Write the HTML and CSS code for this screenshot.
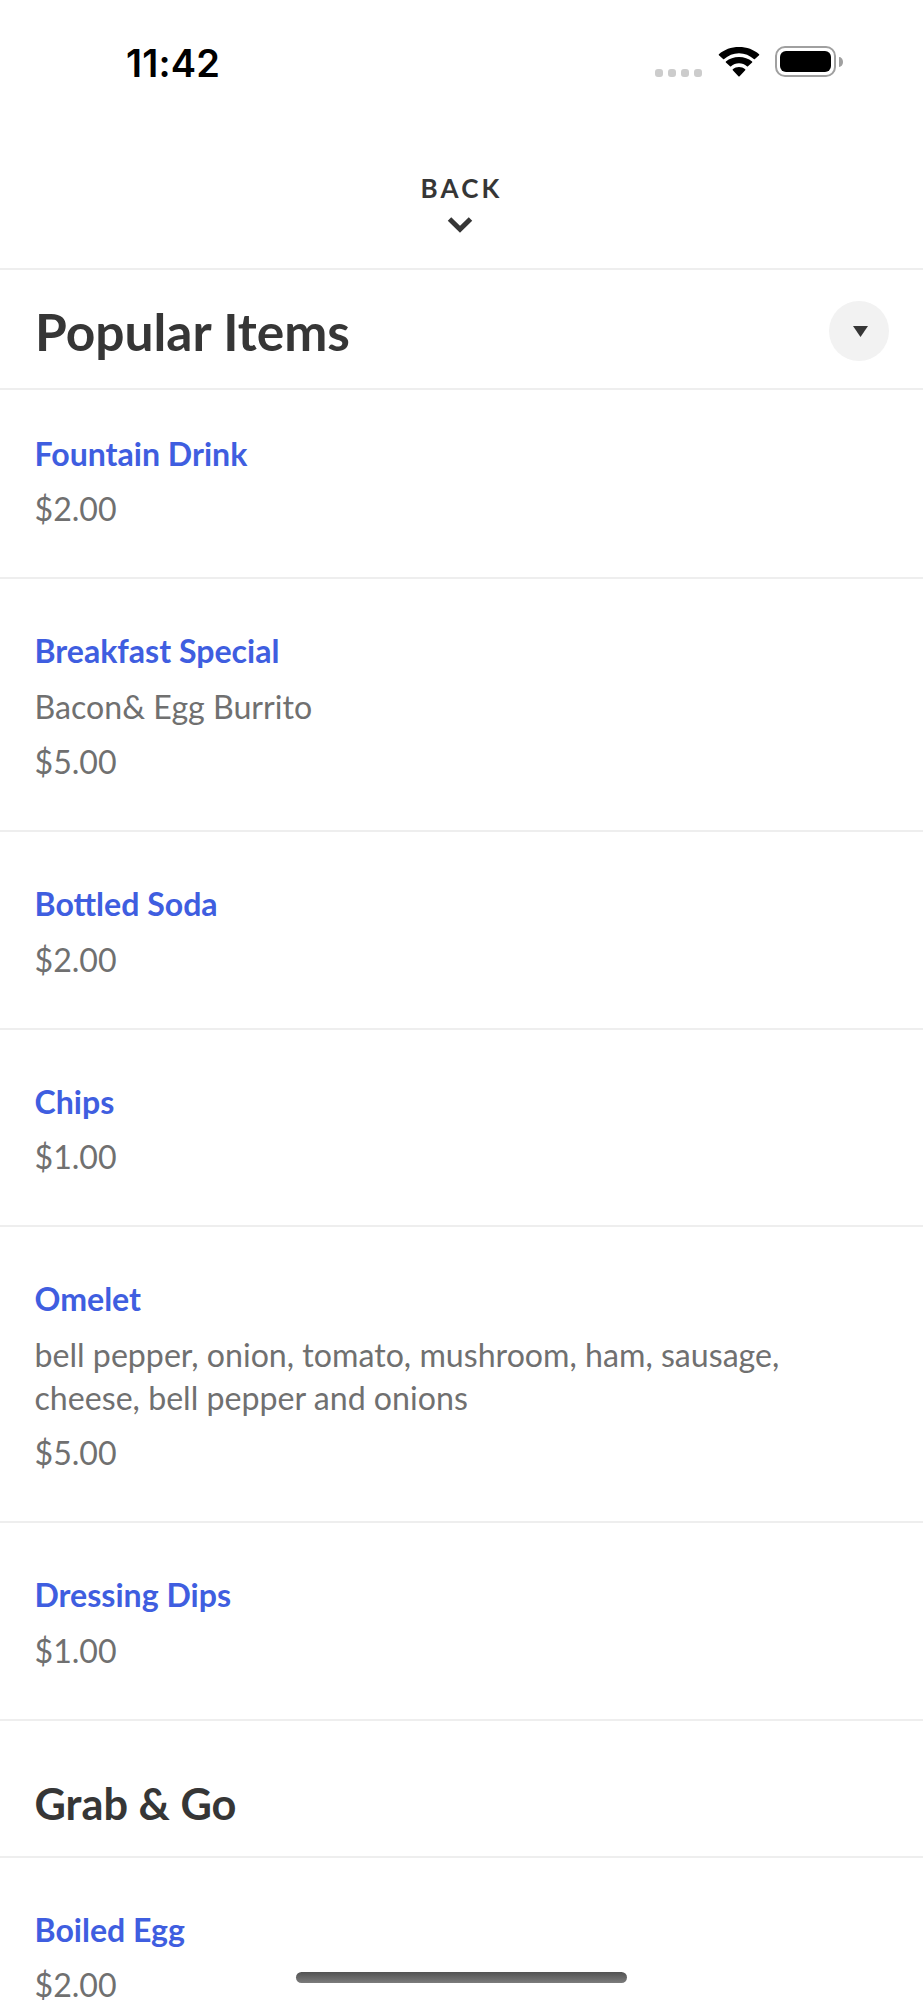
FILE: index.html
```html
<!DOCTYPE html>
<html lang="en">
  <head>
    <meta charset="UTF-8" />
    <title>Popular Items</title>
    <link rel="stylesheet" href="styles.css">
  </head>

  <body>
    <div class="statusbar">
      <span class="time">11:42</span>
      <div class="status-icons">
        <div class="dots"><i></i><i></i><i></i><i></i></div>
        <svg class="wifi" width="42" height="30" viewBox="0 0 42 30">
          <path d="M21 6.200c5.700 0 10.900 2.200 14.800 5.900.3.300.8.300 1.100 0l4.200-3.800c.3-.3.300-.8 0-1.100C35.900 2.600 28.800 0 21 0S6.100 2.600.9 7.200c-.3.300-.3.800 0 1.100l4.200 3.800c.3.300.8.300 1.100 0C10.100 8.400 15.300 6.200 21 6.200z"/>
          <path d="M21 16.200c3 0 5.800 1.100 7.900 3 .3.300.8.300 1.100 0l4.100-3.600c.3-.3.300-.8 0-1.100C30.600 11.700 26 10 21 10s-9.600 1.700-13.100 4.500c-.3.300-.3.800 0 1.100l4.100 3.600c.3.300.8.300 1.100 0 2.100-1.900 4.900-3 7.900-3z"/>
          <path d="M27.200 23.300c.3-.3.300-.8 0-1.100-3.600-2.900-8.800-2.900-12.400 0-.3.300-.3.800 0 1.100l5.600 6c.3.300.9.300 1.200 0z"/>
        </svg>
        <div class="battery"><b></b></div>
        <div class="tip"></div>
      </div>
    </div>

    <header>
      <span>BACK</span>
      <svg width="26" height="18" viewBox="0 0 26 18">
        <path d="M2.500 3l10.500 10.200L23.500 3" fill="none" stroke="#363636" stroke-width="5"/>
      </svg>
    </header>

    <div class="title">
      <h1>Popular Items</h1>
      <button>
        <svg width="15" height="11" viewBox="0 0 15 11"><path d="M0 0h15L7.500 11z" fill="#363636"/></svg>
      </button>
    </div>

    <section class="first">
      <article>
        <h3>Fountain Drink</h3>
        <p>$2.00</p>
      </article>
      <article>
        <h3>Breakfast Special</h3>
        <p>Bacon&amp; Egg Burrito</p>
        <p>$5.00</p>
      </article>
      <article>
        <h3>Bottled Soda</h3>
        <p>$2.00</p>
      </article>
      <article>
        <h3>Chips</h3>
        <p>$1.00</p>
      </article>
      <article>
        <h3>Omelet</h3>
        <p>bell pepper, onion, tomato, mushroom, ham, sausage, cheese, bell pepper and onions</p>
        <p>$5.00</p>
      </article>
      <article>
        <h3>Dressing Dips</h3>
        <p>$1.00</p>
      </article>
    </section>

    <h2>Grab &amp; Go</h2>

    <section>
      <article>
        <h3>Boiled Egg</h3>
        <p>$2.00</p>
      </article>
    </section>

    <div class="home"></div>
  </body>
</html>
```

FILE: styles.css
```css
* {
  box-sizing: border-box;
}

body {
  margin: 0;
  height: 2000px;
  overflow: hidden;
  position: relative;
  background-color: white;
  color: #363636;
  font-family: Lato, sans-serif;
}

h1,
h2,
h3,
p {
  margin: 0;
}

.statusbar {
  height: 123px;
  padding: 0 80px 0 126px;
  display: flex;
  justify-content: space-between;
  align-items: center;
  color: black;
}

.time {
  padding-top: 2px;
  font-family: Inter, sans-serif;
  font-size: 38px;
  font-weight: 600;
  letter-spacing: 0.2px;
}

.status-icons {
  display: flex;
  align-items: center;
}

.dots {
  display: flex;
  gap: 5px;
  margin: 23px 16px 0 0;
}

.dots i {
  width: 8px;
  height: 8px;
  border-radius: 3px;
  background-color: #ccc;
}

.wifi {
  margin-right: 15px;
}

.battery {
  width: 61px;
  height: 31px;
  padding: 3px;
  border: 2px solid #a0a0a0;
  border-radius: 10px;
}

.battery b {
  display: block;
  height: 100%;
  border-radius: 6px;
  background-color: black;
}

.tip {
  width: 4px;
  height: 10px;
  margin-left: 3px;
  border-radius: 0 4px 4px 0 / 0 5px 5px 0;
  background-color: #a0a0a0;
}

header {
  height: 147px;
  padding-top: 48px;
  display: flex;
  flex-direction: column;
  align-items: center;
  border-bottom: 2px solid #eee;
}

header span {
  font-size: 26px;
  line-height: 34px;
  font-weight: 700;
  letter-spacing: 3.2px;
}

header svg {
  margin: 11px 3px 0 0;
}

.title {
  height: 120px;
  padding: 3px 34px 0 35px;
  display: flex;
  justify-content: space-between;
  align-items: center;
  border-bottom: 2px solid #eee;
}

h1 {
  font-size: 51.5px;
}

button {
  width: 60px;
  height: 60px;
  padding: 2px 0 0 2px;
  display: flex;
  justify-content: center;
  align-items: center;
  border: none;
  border-radius: 50%;
  background-color: #f2f2f2;
}

article {
  padding: 50px 100px 47px 34.5px;
  border-bottom: 2px solid #eee;
}

.first article:first-child {
  padding-top: 41.5px;
}

h3 {
  font-size: 32.1px;
  line-height: 43px;
  color: #3f5ee0;
}

p {
  margin-top: 12.5px;
  font-size: 32.15px;
  line-height: 43px;
  color: #707070;
}

h2 {
  height: 137px;
  padding: 52px 34.5px 0;
  font-size: 43.3px;
  line-height: 60px;
  border-bottom: 2px solid #eee;
}

/* home indicator */
.home {
  position: absolute;
  left: 296px;
  top: 1972px;
  width: 331px;
  height: 11px;
  border-radius: 6px;
  background: linear-gradient(#525252, #7c7c7c);
}
```
